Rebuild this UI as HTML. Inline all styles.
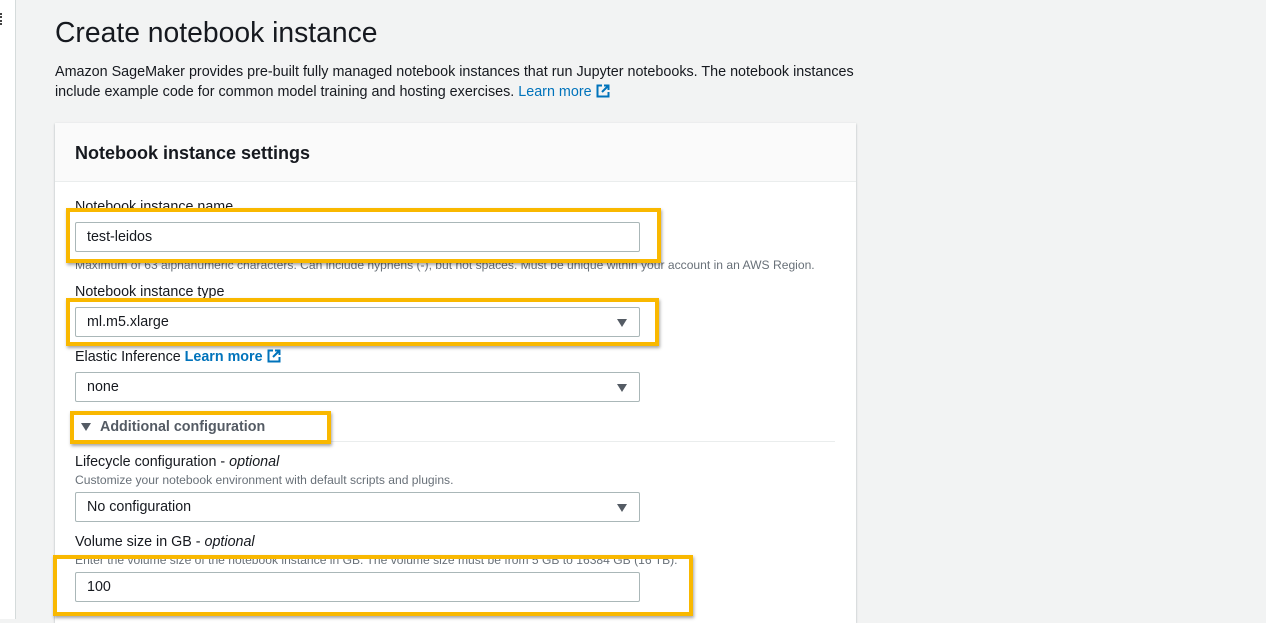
<!DOCTYPE html>
<html><head><meta charset="utf-8"><style>
*{margin:0;padding:0;box-sizing:border-box}
body{width:1266px;height:619px;overflow:hidden;background:#f2f3f3;font-family:"Liberation Sans",sans-serif;color:#16191f;position:relative}
.a{position:absolute;white-space:nowrap}
.side{left:0;top:0;width:16px;height:619px;background:#fff;border-right:1px solid #d5dbdb}
.panel{left:55px;top:123px;width:801px;height:500px;background:#fff;box-shadow:0 1px 2px rgba(0,28,36,.3)}
.hdr{left:55px;top:123px;width:801px;height:59px;background:#fafafa;border-bottom:1px solid #eaeded}
.inp{background:#fff;border:1px solid #aab7b8;border-radius:2px;height:30px;width:565px;font-size:14.3px;line-height:28px;padding-left:11px}
.lbl{font-size:14.3px}
.hint{font-size:12.1px;color:#687078}
.arrow{position:absolute;right:12px;top:11px;width:0;height:0;border-left:5.5px solid transparent;border-right:5.5px solid transparent;border-top:8px solid #545b64}
.hl{position:absolute;border:4px solid #f9b800;box-shadow:1px 2px 3px rgba(0,0,0,.35)}
.lnk{color:#0073bb}
</style></head><body>
<div class="a side"></div>
<div class="a" style="left:0;top:13px;width:3px;height:12px;border-left:2px dotted #444"></div>
<div class="a" style="left:55px;top:16px;font-size:28.3px;color:#16191f">Create notebook instance</div>
<div class="a" style="left:55px;top:62px;font-size:14.35px;line-height:20px">Amazon SageMaker provides pre-built fully managed notebook instances that run Jupyter notebooks. The notebook instances<br>include example code for common model training and hosting exercises. <span class="lnk">Learn more</span> <svg width="14" height="14" viewBox="0 0 14 14" style="vertical-align:-2px"><path d="M6 1.5H1.5v11h11V8M8 1.5h4.5V6M12.5 1.5L6 8" fill="none" stroke="#0073bb" stroke-width="2"/></svg></div>
<div class="a panel"></div>
<div class="a hdr"></div>
<div class="a" style="left:75px;top:143px;font-size:18px;font-weight:bold">Notebook instance settings</div>

<div class="a lbl" style="left:75px;top:199px">Notebook instance name</div>
<div class="a inp" style="left:75px;top:222px">test-leidos</div>
<div class="a hint" style="left:75px;top:258px">Maximum of 63 alphanumeric characters. Can include hyphens (-), but not spaces. Must be unique within your account in an AWS Region.</div>
<div class="hl" style="left:66px;top:208px;width:595px;height:55px"></div>

<div class="a lbl" style="left:75px;top:284px">Notebook instance type</div>
<div class="a inp" style="left:75px;top:307px">ml.m5.xlarge<span class="arrow"></span></div>
<div class="hl" style="left:66px;top:298px;width:593px;height:48px"></div>

<div class="a lbl" style="left:75px;top:349px">Elastic Inference <b class="lnk">Learn more</b> <svg width="14" height="14" viewBox="0 0 14 14" style="vertical-align:-2px"><path d="M6 1.5H1.5v11h11V8M8 1.5h4.5V6M12.5 1.5L6 8" fill="none" stroke="#0073bb" stroke-width="2"/></svg></div>
<div class="a inp" style="left:75px;top:372px">none<span class="arrow"></span></div>

<div class="a" style="left:75px;top:441px;width:760px;height:1px;background:#eaeded"></div>
<div class="a" style="left:81px;top:423px;width:0;height:0;border-left:5.5px solid transparent;border-right:5.5px solid transparent;border-top:8px solid #545b64"></div>
<div class="a" style="left:100px;top:419px;font-size:14.3px;font-weight:bold;color:#545b64">Additional configuration</div>
<div class="hl" style="left:70px;top:411px;width:261px;height:33px"></div>

<div class="a lbl" style="left:75px;top:454px">Lifecycle configuration - <i>optional</i></div>
<div class="a hint" style="left:75px;top:473px">Customize your notebook environment with default scripts and plugins.</div>
<div class="a inp" style="left:75px;top:492px">No configuration<span class="arrow"></span></div>

<div class="a lbl" style="left:75px;top:534px">Volume size in GB - <i>optional</i></div>
<div class="a hint" style="left:75px;top:553px">Enter the volume size of the notebook instance in GB. The volume size must be from 5 GB to 16384 GB (16 TB).</div>
<div class="a inp" style="left:75px;top:572px">100</div>
<div class="hl" style="left:53px;top:555px;width:640px;height:61px"></div>
</body></html>
